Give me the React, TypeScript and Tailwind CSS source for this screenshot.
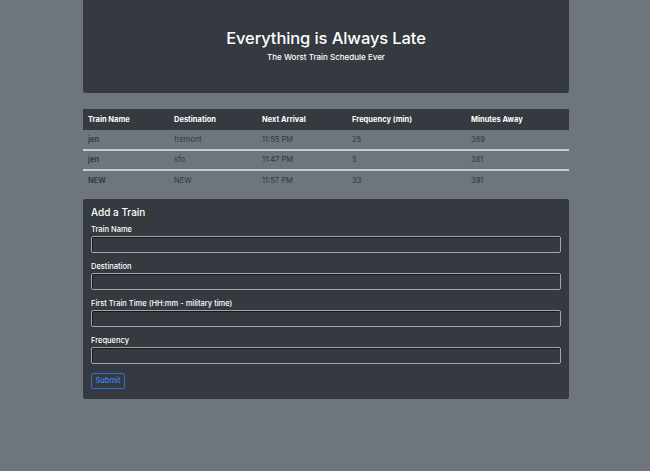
import React from "react";

const trains = [
  { name: "jen", dest: "fremont", next: "11:55 PM", freq: "25", away: "389" },
  { name: "jen", dest: "sfo", next: "11:47 PM", freq: "5", away: "381" },
  { name: "NEW", dest: "NEW", next: "11:57 PM", freq: "33", away: "391" },
];

const fields = ["Train Name", "Destination", "First Train Time (HH:mm - military time)", "Frequency"];

export default function App() {
  return (
    <main className="min-h-[471px] bg-[#6e757d] font-['Inter','Liberation_Sans',sans-serif]">
      <div className="mx-auto w-[486px] translate-x-[1px]">

        {/* Header */}
        <header className="flex h-[93px] flex-col items-center justify-center rounded-b-[3px] bg-[#343a40] pb-[3px] text-white">
          <h1 className="text-[16.5px] font-medium leading-[20px] tracking-[-0.1px]">Everything is Always Late</h1>
          <p className="mt-[4px] text-[8px] font-medium leading-[10px]">The Worst Train Schedule Ever</p>
        </header>

        {/* Schedule */}
        <table className="mt-[16px] w-full table-fixed border-collapse text-left text-[7.5px]">
          <thead>
            <tr className="h-[21px] bg-[#343a40] text-white">
              <th className="w-[91px] pl-[5px] font-bold">Train Name</th>
              <th className="w-[88px] font-bold">Destination</th>
              <th className="w-[90px] font-bold">Next Arrival</th>
              <th className="w-[119px] font-bold">Frequency (min)</th>
              <th className="font-bold">Minutes Away</th>
            </tr>
          </thead>
          <tbody className="text-[#30353b]">
            {trains.map((t, i) => (
              <tr key={i} className={`h-[20px] ${i > 0 ? "border-t-2 border-[#c9ccd0]" : ""}`}>
                <td className="pl-[5px] font-semibold">{t.name}</td>
                <td>{t.dest}</td>
                <td>{t.next}</td>
                <td>{t.freq}</td>
                <td>{t.away}</td>
              </tr>
            ))}
          </tbody>
        </table>

        {/* Add a Train */}
        <section className="mt-[9px] h-[200px] rounded-[2px] bg-[#343a40] px-[8px] pt-[7px] text-white">
          <h2 className="text-[10px] font-medium leading-[12px]">Add a Train</h2>
          <form className="mt-[7px] flex flex-col gap-[9px]" onSubmit={(e) => e.preventDefault()}>
            {fields.map((f) => (
              <label key={f} className="flex flex-col gap-[2px] text-[7.5px] font-medium leading-[9px]">
                {f}
                <input className="h-[17px] w-full rounded-[2px] border border-[#a3a7ad] bg-[#343a40] shadow-[inset_1px_1px_0_#15181b]" />
              </label>
            ))}
            <button className="h-[16px] w-[34px] rounded-[2px] border border-[#2f6fd1] text-[7.5px] font-medium text-[#3d84f0]">
              Submit
            </button>
          </form>
        </section>

      </div>
    </main>
  );
}
